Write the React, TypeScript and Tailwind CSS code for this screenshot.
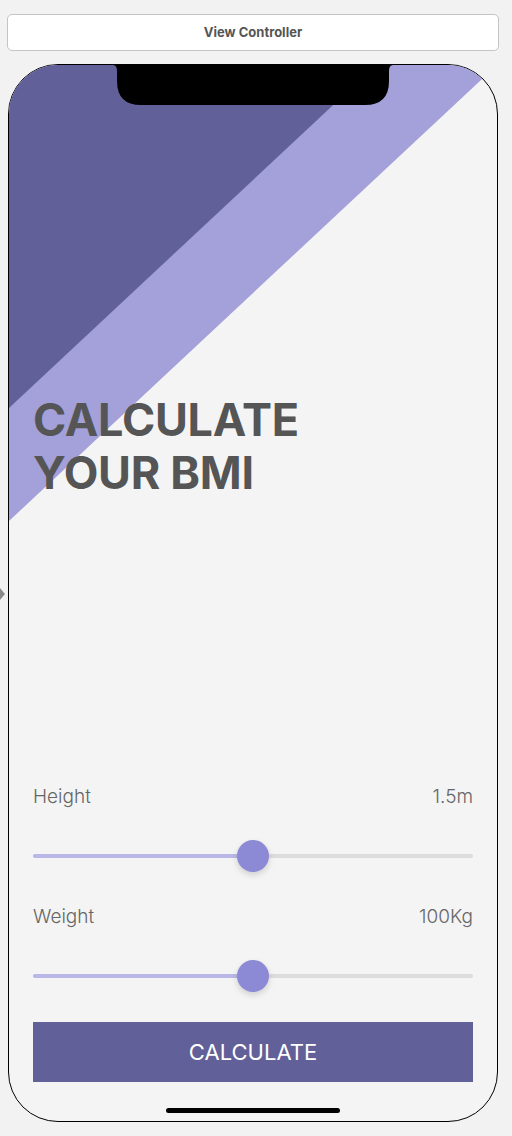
const font = { fontFamily: "Inter, 'Noto Sans', sans-serif" };

const Slider = ({ value }: { value: number }) => (
  <div className="relative h-[32px] flex items-center">
    <div className="w-full h-[4px] rounded-full bg-[#dcdcdc] flex overflow-hidden">
      <div className="h-full bg-[#b9b7e6]" style={{ width: `${value}%` }} />
    </div>
    <div
      className="absolute top-0 w-[32px] h-[32px] -ml-[16px] rounded-full bg-[#8c8ad4] shadow-[0_3px_6px_rgba(0,0,0,0.15)]"
      style={{ left: `${value}%` }}
    />
  </div>
);

const Row = ({ label, value }: { label: string; value: string }) => (
  <div className="flex justify-between items-center h-[23px] text-[19px] leading-[23px] font-light text-[#666]">
    <span>{label}</span>
    <span>{value}</span>
  </div>
);

export default function App() {
  return (
    <div className="relative min-h-[1136px] bg-[#f2f2f2] pt-[14px]" style={font}>
      {/* scene title bar */}
      <div className="mx-[7px] w-[492px] h-[37px] bg-white border border-[#c4c4c4] rounded-[5px] flex items-center justify-center">
        <span className="text-[13px] font-bold text-[#555]">View Controller</span>
      </div>

      {/* entry arrow */}
      <div className="absolute left-0 top-[588px] w-0 h-0 border-y-[6px] border-y-transparent border-l-[5px] border-l-[#8a8a8a]" />

      {/* phone */}
      <div className="relative mt-[13px] ml-[8px] w-[490px] h-[1058px] rounded-[50px] border-[1.5px] border-black bg-[#f4f4f4] overflow-hidden">
        <svg className="absolute inset-0" width="487" height="1055" viewBox="0 0 487 1055">
          <polygon points="0,0 488,0 0,456" fill="#a3a0da" />
          <polygon points="0,0 367,0 0,343" fill="#626098" />
          <path
            d="M104 0 Q108 0 108 6 L108 16 Q108 40 132 40 L356 40 Q380 40 380 16 L380 6 Q380 0 384 0 Z"
            fill="#000"
          />
        </svg>

        <div className="relative flex flex-col px-6">
          <h1 className="mt-[328px] text-[45px] leading-[53px] font-bold text-[#555] tracking-[-0.3px]">
            CALCULATE
            <br />
            YOUR BMI
          </h1>

          <div className="mt-[286px]">
            <Row label="Height" value="1.5m" />
          </div>
          <div className="mt-[32px]">
            <Slider value={50} />
          </div>
          <div className="mt-[33px]">
            <Row label="Weight" value="100Kg" />
          </div>
          <div className="mt-[32px]">
            <Slider value={50} />
          </div>
          <button className="mt-[30px] h-[60px] w-full bg-[#626098] text-white text-[22px] font-normal">
            CALCULATE
          </button>
          <div className="mt-[26px] mx-auto w-[174px] h-[5px] rounded-full bg-black" />
        </div>
      </div>
    </div>
  );
}
